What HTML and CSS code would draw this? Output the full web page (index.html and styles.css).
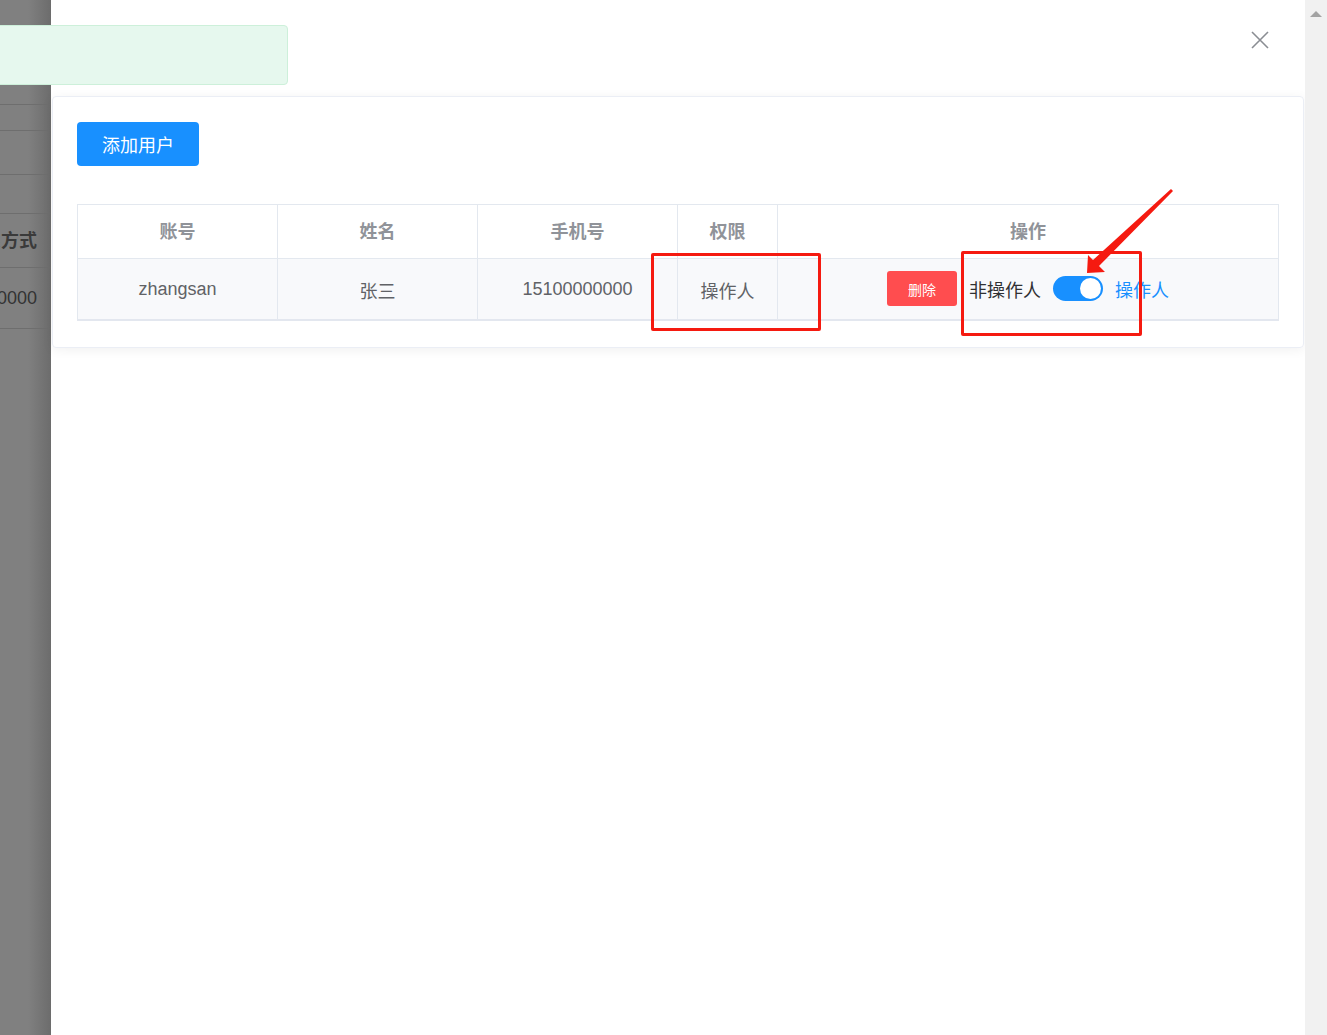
FILE: index.html
```html
<!DOCTYPE html>
<html>
  <head>
    <meta charset="utf-8">
    <title>用户管理</title>
    <link rel="stylesheet" href="styles.css">
  </head>
  <body>
    <div class="page">
      <!-- 底层页面，被遮罩盖住 -->
      <div class="under">
        <div class="under-row r1"></div>
        <div class="under-row r2"></div>
        <div class="under-row r3"></div>
        <div class="under-row r4"></div>
        <div class="under-row r5"><span class="under-th">联系方式</span></div>
        <div class="under-row r6"><span class="under-td">15100000000</span></div>
      </div>

      <div class="drawer">
        <div class="drawer-head">
          <svg class="close" width="18" height="18" viewBox="0 0 18 18">
            <path d="M1 1L17 17M17 1L1 17" stroke="#8a8d93" stroke-width="1.6" fill="none"/>
          </svg>
        </div>
        <div class="card">
          <button class="btn-add">添加用户</button>
          <table class="tb">
            <colgroup>
              <col style="width:200px">
              <col style="width:200px">
              <col style="width:200px">
              <col style="width:100px">
              <col>
            </colgroup>
            <thead>
              <tr>
                <th>账号</th>
                <th>姓名</th>
                <th>手机号</th>
                <th>权限</th>
                <th>操作</th>
              </tr>
            </thead>
            <tbody>
              <tr>
                <td>zhangsan</td>
                <td>张三</td>
                <td>15100000000</td>
                <td>操作人</td>
                <td>
                  <div class="ops">
                    <button class="btn-del">删除</button>
                    <span class="sw-label">非操作人</span>
                    <span class="switch"><i></i></span>
                    <span class="sw-label on">操作人</span>
                  </div>
                </td>
              </tr>
            </tbody>
          </table>
        </div>
      </div>

      <div class="scrollbar">
        <span class="sb-up"></span>
      </div>
    </div>

    <!-- 提示消息 -->
    <div class="toast"></div>

    <!-- 截图标注 -->
    <div class="mark mark1"></div>
    <div class="mark mark2"></div>
    <svg class="arrow" width="1327" height="400" viewBox="0 0 1327 400">
      <polygon points="1087,273 1088,255 1093,260 1171,189 1173,191 1099,266 1105,272" fill="#f51a10"/>
    </svg>
  </body>
</html>
```

FILE: styles.css
```css
*{
  margin: 0;
  padding: 0;
  box-sizing: border-box;
}
body{
  font-family: "Liberation Sans", "Noto Sans CJK SC", sans-serif;
  background: #fff;
  overflow: hidden;
}
.page{
  display: flex;
  height: 100vh;
}

/* 左侧遮罩 */
.under{
  width: 51px;
  flex: none;
  background: linear-gradient(to right, #808080 55%, #6c6c6c 100%);
  overflow: hidden;
}
.under-row{
  border-bottom: 1px solid #6e6e6e;
  display: flex;
  align-items: center;
  justify-content: flex-end;
  padding-right: 14px;
  white-space: nowrap;
  font-size: 18px;
}
.r1{ height: 105px; }
.r2{ height: 26px; }
.r3{ height: 44px; }
.r4{ height: 39px; }
.r5{ height: 54px; }
.r6{ height: 61px; }
.under-th{
  font-weight: bold;
  color: #3a3a3a;
  padding-bottom: 3px;
}
.under-td{
  color: #333;
}

/* 抽屉 */
.drawer{
  flex: 1;
  background: #fff;
  padding: 0 1px;
}
.drawer-head{
  height: 96px;
  display: flex;
  justify-content: flex-end;
  padding: 31px 35px 0 0;
}
.close{
  display: block;
}
.card{
  border: 1px solid #ebeef5;
  border-radius: 4px;
  box-shadow: 0 2px 12px rgba(0,0,0,.06);
  padding: 25px 24px 26px 24px;
}
.btn-add{
  display: block;
  width: 122px;
  height: 44px;
  border: none;
  border-radius: 4px;
  background: #1890ff;
  color: #fff;
  font-size: 18px;
  font-family: inherit;
}
.tb{
  margin-top: 38px;
  width: 1202px;
  border-collapse: collapse;
  table-layout: fixed;
  font-size: 18px;
}
.tb th,
.tb td{
  border: 1px solid #e3e8ef;
  text-align: center;
}
.tb th{
  height: 54px;
  padding-bottom: 4px;
  color: #909399;
  font-weight: bold;
}
.tb td{
  height: 61px;
  padding-top: 2px;
  color: #606266;
  background: #f8f9fb;
  border-bottom: 2px solid #e3e7ef;
}
.ops{
  display: flex;
  align-items: center;
  justify-content: center;
  gap: 12px;
  margin-top: -2px;
}
.btn-del{
  width: 70px;
  height: 35px;
  border: none;
  border-radius: 3px;
  background: #ff4d4f;
  color: #fff;
  font-size: 14px;
  font-family: inherit;
}
.sw-label{
  color: #303133;
}
.sw-label.on{
  color: #1890ff;
}
.switch{
  width: 50px;
  height: 25px;
  border-radius: 13px;
  background: #1890ff;
  position: relative;
}
.switch i{
  position: absolute;
  right: 2px;
  top: 2px;
  width: 21px;
  height: 21px;
  border-radius: 50%;
  background: #fff;
}

/* 滚动条 */
.scrollbar{
  width: 22px;
  flex: none;
  background: #f1f1f1;
  display: flex;
  justify-content: center;
  padding-top: 11px;
}
.sb-up{
  width: 0;
  height: 0;
  border-left: 6px solid transparent;
  border-right: 6px solid transparent;
  border-bottom: 6px solid #a3a3a3;
}

/* 消息提示 */
.toast{
  position: absolute;
  left: -10px;
  top: 25px;
  width: 298px;
  height: 60px;
  background: #e6f8ee;
  border: 1px solid #cdf0da;
  border-radius: 4px;
}

/* 标注 */
.mark{
  position: absolute;
  border: 3px solid #f51a10;
  border-radius: 2px;
}
.mark1{
  left: 651px;
  top: 253px;
  width: 170px;
  height: 78px;
}
.mark2{
  left: 961px;
  top: 251px;
  width: 181px;
  height: 85px;
}
.arrow{
  position: absolute;
  left: 0;
  top: 0;
}
```
